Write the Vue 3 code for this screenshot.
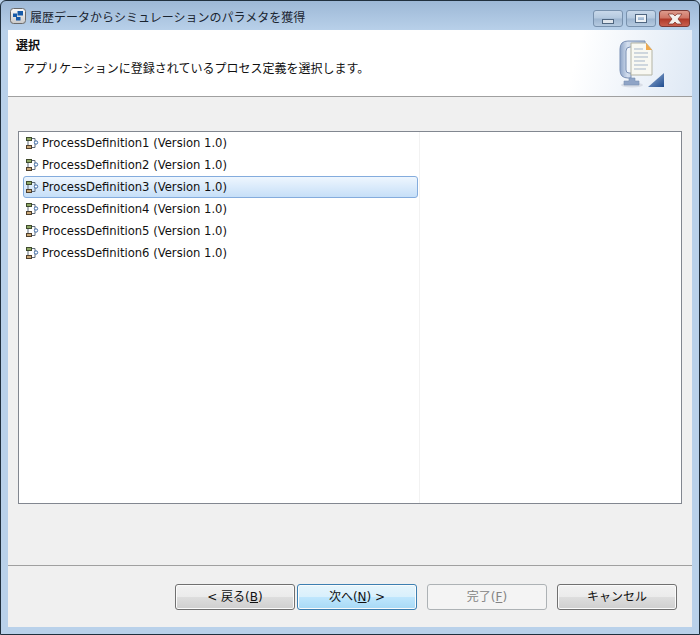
<script setup>
const items = [1, 2, 3, 4, 5, 6].map((n) => ({ n, label: `ProcessDefinition${n} (Version 1.0)` }))
</script>

<template>
  <div class="win">
    <div class="titlebar">
      <svg class="appicon" width="16" height="16" viewBox="0 0 16 16">
        <defs>
          <linearGradient id="ag" x1="0" y1="0" x2="0" y2="1">
            <stop offset="0" stop-color="#fafafa" />
            <stop offset="1" stop-color="#c9c9c9" />
          </linearGradient>
        </defs>
        <rect x="0.5" y="0.5" width="15" height="15" rx="3" fill="url(#ag)" stroke="#6a6a6a" />
        <path d="M3 5.5h4V9H3zM7.5 3H13v4.5H7.5zM6 9h4.5v3.5H6z" fill="#155aa8" />
      </svg>
      <span class="title">履歴データからシミュレーションのパラメタを獲得</span>
      <div class="controls">
        <div class="ctl"><span class="min"></span></div>
        <div class="ctl"><span class="max"></span></div>
        <div class="ctl close">
          <svg width="18" height="12" viewBox="0 0 18 12">
            <path d="M2 1h5l2 2 2-2h5l-4 5 4 5h-5L9 9l-2 2H2l4-5z" fill="#f4f0ee" stroke="#7a2c22" stroke-width="0.7" />
          </svg>
        </div>
      </div>
    </div>
    <div class="client">
      <div class="banner">
        <div class="banner-text">
          <div class="h">選択</div>
          <div class="sub">アプリケーションに登録されているプロセス定義を選択します。</div>
        </div>
        <svg class="wiz" width="46" height="48" viewBox="0 0 46 48">
          <defs>
            <linearGradient id="cl" x1="0" y1="0" x2="1" y2="0">
              <stop offset="0" stop-color="#8ea5c8" />
              <stop offset="0.3" stop-color="#d3deee" />
              <stop offset="1" stop-color="#a8bad6" />
            </linearGradient>
            <linearGradient id="tr" x1="0" y1="0" x2="1" y2="1">
              <stop offset="0" stop-color="#9db6d8" />
              <stop offset="1" stop-color="#1f4c8f" />
            </linearGradient>
          </defs>
          <ellipse cx="13" cy="45" rx="11" ry="2.500" fill="#d8dde6" />
          <path d="M26 1H9Q1 1 1 9V30Q1 38 9 38H12V33H10Q7 33 7 30V11Q7 7 11 7H26Z" fill="url(#cl)" stroke="#7b90b4" />
          <path d="M10 38h6v3h4v4H5v-4h5z" fill="#8fa4c6" stroke="#7b90b4" stroke-width="0.6" />
          <path d="M12 3H27L33 10V35H12Z" fill="#f8f8f2" stroke="#b4b4a4" />
          <path d="M27 3L33 10H27Z" fill="#efa94f" />
          <path d="M15 9h9M15 13h14M15 17h14M15 21h11M15 25h14M15 29h12" stroke="#a5b5c9" stroke-width="1" />
          <path d="M45 33V47H29Z" fill="url(#tr)" />
        </svg>
      </div>
      <div class="body">
        <div class="listbox">
          <div class="tree">
            <div v-for="it in items" :key="it.n" class="row" :class="{ sel: it.n === 3 }">
              <svg class="pi" width="16" height="16" viewBox="0 0 16 16">
                <path d="M4 5v6M7 3.500h4M7 12.500h4M11 3.500v9" fill="none" stroke="#5d6a7a" />
                <rect x="2.500" y="2.500" width="5" height="3" fill="#8fa866" stroke="#3f4a2c" />
                <rect x="2.500" y="10.500" width="5" height="3" fill="#c9a878" stroke="#4f3f2c" />
                <circle cx="12" cy="7.500" r="1.700" fill="#fff" stroke="#3d6aa5" />
              </svg>
              <span class="lbl">{{ it.label }}</span>
            </div>
          </div>
          <div class="detail"></div>
        </div>
      </div>
      <div class="footer">
        <button class="btn">&lt; 戻る(<u>B</u>)</button>
        <button class="btn primary">次へ(<u>N</u>) &gt;</button>
        <button class="btn disabled">完了(<u>F</u>)</button>
        <button class="btn cancel">キャンセル</button>
      </div>
    </div>
  </div>
</template>

<style>
html, body { margin: 0; background: #b9d1ea; }
</style>

<style scoped>
.win {
  width: 700px;
  height: 635px;
  box-sizing: border-box;
  background: linear-gradient(#9db8d6 0, #b9d1ea 30px);
  border: 1px solid #20303e;
  border-radius: 6px 6px 0 0;
  padding: 0 7px 7px;
  display: flex;
  flex-direction: column;
  font-family: "DejaVu Sans", "Noto Sans CJK JP", sans-serif;
  font-size: 12px;
  color: #111;
}
.titlebar {
  height: 29px;
  flex: none;
  display: flex;
  align-items: center;
  gap: 4px;
  padding-left: 2px;
  position: relative;
}
.appicon { flex: none; }
.title { font-size: 12px; color: #1a2430; padding-top: 2px; }
.controls {
  position: absolute;
  top: 9px;
  right: 2px;
  display: flex;
  gap: 3px;
}
.ctl {
  width: 30px;
  height: 17px;
  box-sizing: border-box;
  border: 1px solid #7891ad;
  border-radius: 3px;
  background: linear-gradient(#c8d8ea 0, #b4c9df 48%, #9db5d0 52%, #b5cae0 100%);
  display: flex;
  align-items: center;
  justify-content: center;
}
.ctl .min {
  width: 10px;
  height: 3px;
  margin-top: 5px;
  background: #dfe5ec;
  border: 1px solid #4f6680;
}
.ctl .max {
  width: 6px;
  height: 3px;
  background: transparent;
  border: 2px solid #eef2f6;
  outline: 1px solid #4f6680;
}
.ctl.close {
  width: 31px;
  border-color: #7a3a36;
  background: linear-gradient(#dd9a8c 0, #cf7666 45%, #b03a2a 55%, #c9604f 100%);
}
.client {
  flex: 1;
  min-height: 0;
  display: flex;
  flex-direction: column;
  background: #f0f0f0;
}
.banner {
  height: 66px;
  flex: none;
  background: linear-gradient(105deg, #fff 82%, #dfe9f5 100%);
  border-bottom: 1px solid #a0a0a0;
  position: relative;
}
.banner-text { padding: 7px 0 0 8px; }
.h { font-weight: 700; font-size: 12px; line-height: 18px; }
.sub { padding: 5px 0 0 7px; line-height: 18px; }
.wiz { position: absolute; right: 27px; top: 10px; }
.body {
  flex: 1;
  min-height: 0;
  padding: 34px 10px 61px;
  display: flex;
}
.listbox {
  flex: 1;
  display: flex;
  background: #fff;
  border: 1px solid #828790;
}
.tree {
  width: 401px;
  flex: none;
  padding: 0 0 0 4px;
  box-sizing: border-box;
  border-right: 1px solid #f2f2f2;
}
.detail { flex: 1; }
.row {
  height: 22px;
  display: flex;
  align-items: center;
  box-sizing: border-box;
  padding-left: 1px;
  gap: 2px;
  margin-right: 1px;
}
.row.sel {
  border: 1px solid #84acdd;
  border-radius: 3px;
  background: linear-gradient(#eef6fe, #c6dff8);
  padding-left: 0;
}
.pi { flex: none; }
.lbl { font-size: 11.6px; line-height: 20px; }
.footer {
  height: 62px;
  box-sizing: border-box;
  flex: none;
  border-top: 1px solid #a0a0a0;
  display: flex;
  justify-content: flex-end;
  align-items: flex-start;
  gap: 2px;
  padding: 18px 15px 0 0;
}
.btn {
  width: 120px;
  height: 26px;
  box-sizing: border-box;
  border: 1px solid #707070;
  border-radius: 3px;
  background: linear-gradient(#f2f2f2 0, #ebebeb 48%, #dddddd 52%, #cfcfcf 100%);
  font: inherit;
  font-size: 12px;
  color: #111;
  padding: 0 0 3px;
  box-shadow: inset 0 0 0 1px #fbfbfb;
}
.btn.primary {
  border-color: #3c7fb1;
  background: linear-gradient(#e6f5fc 0, #d9f0fc 48%, #bee6fd 52%, #a7d9f5 100%);
}
.btn.disabled {
  border-color: #adb2b5;
  background: #f4f4f4;
  color: #838383;
  margin-left: 8px;
  box-shadow: none;
}
.btn.cancel { margin-left: 8px; }
</style>
